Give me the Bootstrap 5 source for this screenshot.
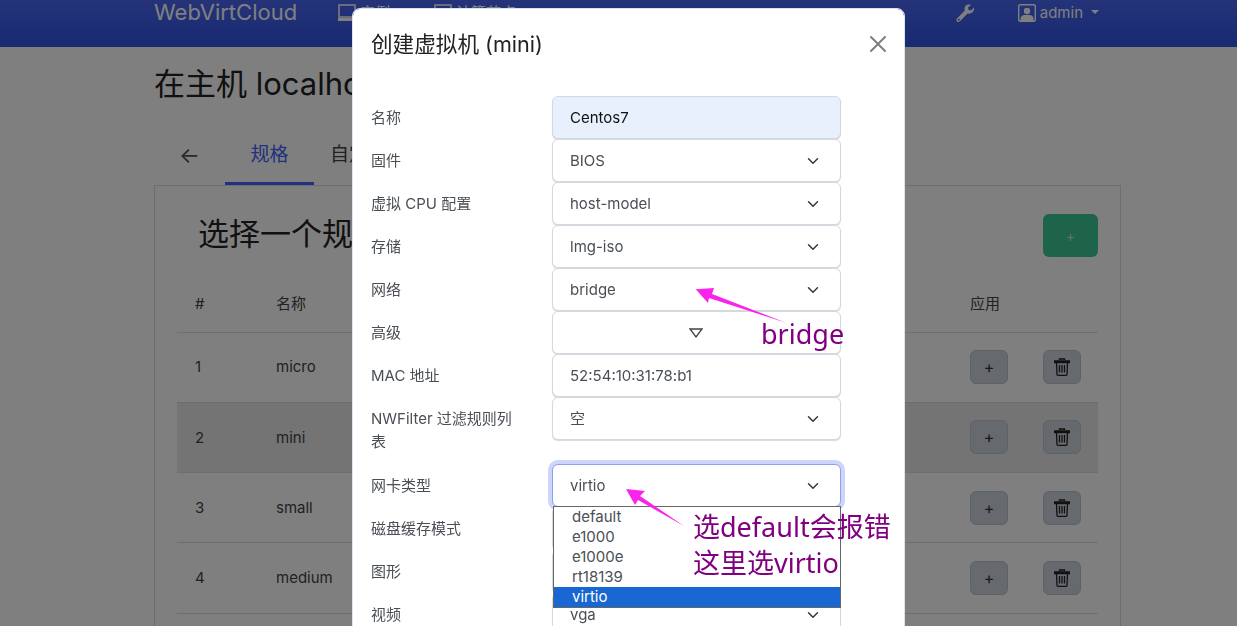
<!DOCTYPE html>
<html lang="zh-CN">
<head>
    <meta charset="UTF-8">
    <title>WebVirtCloud</title>
    <link href="https://cdn.jsdelivr.net/npm/bootstrap@5.3.0/dist/css/bootstrap.min.css" rel="stylesheet">
    <style>
        html, body { height: 100%; overflow: hidden; }
        body { background: #fff; color: #222; font-family: Inter, "Noto Sans CJK SC", sans-serif; font-size: 15px; }
        .top-bar { height: 47px; background: linear-gradient(#4a66f2, #2f55e6); padding-left: 154px; color: #fff; }
        .top-brand { font-size: 22px; line-height: 24px; width: 184px; }
        .top-link { line-height: 26px; margin-right: 44px; }
        .top-right { margin-left: auto; margin-right: 138px; gap: 43px; line-height: 26px; }
        .page-wrap { width: 967px; margin-left: 154px; }
        .page-title { font-size: 31px; font-weight: 400; line-height: 38px; margin: 18px 0 0; white-space: nowrap; }
        .tab-row { height: 66px; margin-top: 16px; }
        .tab-item { color: #444; font-size: 19px; width: 89px; height: 66px; line-height: 72px; text-align: center; }
        .tab-back { width: 71px; font-size: 22px; color: #555; }
        .tab-on { color: #4460fe; border-bottom: 3px solid #4460fe; }
        .flavor-card { border: 1px solid #ddd; height: 600px; padding: 28px 22px 0; border-radius: 0; }
        .card-head { height: 43px; }
        .card-title-big { font-size: 31px; font-weight: 400; line-height: 38px; margin: 0 0 3px 21px; white-space: nowrap; }
        .btn-add { width: 55px; height: 43px; background: #3cc896; border: 0; color: #ddd; font-size: 14px; }
        .flavor-table { width: 921px; margin-top: 21px; table-layout: fixed; --bs-table-bg: transparent; }
        .flavor-table th, .flavor-table td { font-weight: 400; color: #444; padding: 1px 0 0 18px; vertical-align: middle; border-color: #ddd; }
        .flavor-table thead tr { height: 54px; }
        .flavor-table thead th { padding-top: 0; padding-bottom: 2px; }
        .flavor-table .cell-act { padding-left: 0; padding-top: 0; }
        .flavor-table tbody tr { height: 70.3px; }
        .row-hot td { background: #e8e8e8; }
        .btn-act { width: 38px; height: 34px; padding: 0; background: #ccd3da; border: 1px solid #bcc4cc; color: #333; line-height: 1; }
        .btn-act svg { display: block; margin: auto; }

        .dlg { width: 553px; max-width: 553px; margin: 8px 0 0 352px; }
        .dlg .modal-content { border-radius: 8px; height: 800px; display: block; border-color: #dde3f0; }
        .dlg-head { height: 71px; padding: 15px 18px 17px; }
        .dlg-title { font-size: 21.6px; font-weight: 400; line-height: 36px; }
        .dlg-close { margin: 0; padding: 0; width: 16px; height: 16px; background-size: 16px; margin-right: 1px; }
        .dlg-body { padding: 16px 18px; }
        .form-line { min-height: 43px; }
        .form-name { width: 181px; padding: 10px 30px 10px 0; margin: 0; line-height: 23px; color: #4a4f55; }
        .form-name.two-line { padding-bottom: 11px; }
        .form-val { width: 289px; height: 43px; padding: 0 17px; font-size: 15px; color: #4a4f55; border-color: #d4d9e0; border-radius: 6px; box-shadow: 0 1px 1px #d4d9e0; }
        .form-val:focus { box-shadow: none; }
        .form-val.filled { background-color: #e8f0fe; color: #111; }
        .form-val.form-select { padding-top: 2px; background-position: right 19px center; background-size: 16px 12px; }
        .form-val.focused { border-color: #8fa0f4; box-shadow: 0 0 0 4px #cdd6fa; }
        .adv-btn { width: 289px; height: 43px; border: 1px solid #d4d9e0; border-radius: 6px; background: #fff; padding: 0 2px 0 0; box-shadow: 0 1px 1px #d4d9e0; }
        .open-list { position: absolute; z-index: 5; left: 200px; top: 497px; width: 288px; height: 102px; background: #fff; border: 1px solid #666; color: #4a4f55; line-height: 20px; padding-left: 0; margin: 0; list-style: none; }
        .open-list li { padding-left: 18px; }
        .open-list .picked { background: #1967d2; color: #fff; height: 20px; }
        .note-layer { position: fixed; left: 0; top: 0; z-index: 1060; pointer-events: none; }
        .note-text { position: fixed; z-index: 1061; color: #800080; font-family: "Noto Sans", "Noto Sans CJK SC", sans-serif; font-size: 27px; line-height: 36px; white-space: nowrap; }
        .note-1 { left: 761px; top: 316px; }
        .note-2 { left: 693px; top: 509px; }
        .note-3 { left: 693px; top: 545px; }
    </style>
</head>
<body>
    <div class="top-bar d-flex align-items-start">
        <div class="top-brand">WebVirtCloud</div>
        <div class="top-link d-flex align-items-start gap-1">
            <svg width="18" height="18" viewBox="0 0 18 18" class="mt-1"><rect x="1" y="1" width="16" height="12" fill="none" stroke="#fff" stroke-width="1.5"/><rect x="0" y="14" width="18" height="3" fill="#fff"/></svg>
            <span>实例</span>
        </div>
        <div class="top-link d-flex align-items-start gap-1">
            <svg width="18" height="18" viewBox="0 0 18 18" class="mt-1"><rect x="1" y="1" width="16" height="7" fill="none" stroke="#fff" stroke-width="1.5"/><rect x="1" y="10" width="16" height="7" fill="none" stroke="#fff" stroke-width="1.5"/></svg>
            <span>计算节点</span>
        </div>
        <div class="top-right d-flex align-items-start">
            <svg class="mt-1" width="19" height="19" viewBox="0 0 19 19"><path d="M18 3.6 15 6.4 12.6 5.9 12 3.5 15 .8C12.6 0 10 .8 9 2.8 8.4 4 8.4 5.2 8.8 6.4L1 14.4C.1 15.4.1 16.5 1 17.4 1.9 18.3 3 18.2 3.9 17.3L11.6 9.4C13 9.9 14.8 9.7 16.2 8.6 17.7 7.4 18.4 5.5 18 3.6Z" fill="#fff"/><circle cx="2.9" cy="15.8" r="1" fill="#4a66f2"/></svg>
            <div class="d-flex align-items-start">
                <svg class="mt-1 me-1" width="18" height="18" viewBox="0 0 18 18"><rect x=".7" y=".7" width="16.6" height="16.6" rx="1.5" fill="none" stroke="#fff" stroke-width="1.4"/><circle cx="9" cy="7" r="3.2" fill="#fff"/><path d="M2.5 17V14.5C2.5 12.3 4.5 11 6.5 11H11.5C13.5 11 15.5 12.3 15.5 14.5V17Z" fill="#fff"/></svg>
                <span>admin</span>
                <span class="dropdown-toggle ms-2"></span>
            </div>
        </div>
    </div>

    <div class="page-wrap">
        <h1 class="page-title">在主机 localhost 上创建虚拟机</h1>
        <div class="tab-row d-flex">
            <div class="tab-item tab-back">←</div>
            <div class="tab-item tab-on">规格</div>
            <div class="tab-item">自定义</div>
        </div>
        <div class="flavor-card card">
            <div class="card-head d-flex justify-content-between align-items-center">
                <h2 class="card-title-big">选择一个规格</h2>
                <button class="btn-add btn">+</button>
            </div>
            <table class="flavor-table table mb-0">
                <colgroup><col style="width:81px"><col style="width:712px"><col style="width:73px"><col></colgroup>
                <thead><tr><th>#</th><th>名称</th><th class="cell-act">应用</th><th></th></tr></thead>
                <tbody>
                    <tr><td>1</td><td>micro</td><td class="cell-act"><button class="btn-act btn">+</button></td><td class="cell-act"><button class="btn-act btn"><svg width="16" height="18" viewBox="0 0 16 18"><path d="M5.5 2V1H10.5V2M0.5 3H15.5V4.5H.5ZM2.5 4.5 3 16.5C3 17 3.500 17.300 4 17.300H12C12.500 17.300 13 17 13 16.500L13.500 4.500M5.500 7V14.500M8 7V14.500M10.500 7V14.500" fill="none" stroke="#222" stroke-width="1.300"/></svg></button></td></tr>
                    <tr class="row-hot"><td>2</td><td>mini</td><td class="cell-act"><button class="btn-act btn">+</button></td><td class="cell-act"><button class="btn-act btn"><svg width="16" height="18" viewBox="0 0 16 18"><path d="M5.5 2V1H10.5V2M0.5 3H15.5V4.5H.5ZM2.5 4.5 3 16.5C3 17 3.500 17.300 4 17.300H12C12.500 17.300 13 17 13 16.500L13.500 4.500M5.500 7V14.500M8 7V14.500M10.500 7V14.500" fill="none" stroke="#222" stroke-width="1.300"/></svg></button></td></tr>
                    <tr><td>3</td><td>small</td><td class="cell-act"><button class="btn-act btn">+</button></td><td class="cell-act"><button class="btn-act btn"><svg width="16" height="18" viewBox="0 0 16 18"><path d="M5.5 2V1H10.5V2M0.5 3H15.5V4.5H.5ZM2.5 4.5 3 16.5C3 17 3.500 17.300 4 17.300H12C12.500 17.300 13 17 13 16.500L13.500 4.500M5.500 7V14.500M8 7V14.500M10.500 7V14.500" fill="none" stroke="#222" stroke-width="1.300"/></svg></button></td></tr>
                    <tr><td>4</td><td>medium</td><td class="cell-act"><button class="btn-act btn">+</button></td><td class="cell-act"><button class="btn-act btn"><svg width="16" height="18" viewBox="0 0 16 18"><path d="M5.5 2V1H10.5V2M0.5 3H15.5V4.5H.5ZM2.5 4.5 3 16.5C3 17 3.500 17.300 4 17.300H12C12.500 17.300 13 17 13 16.500L13.500 4.500M5.500 7V14.500M8 7V14.500M10.500 7V14.500" fill="none" stroke="#222" stroke-width="1.300"/></svg></button></td></tr>
                </tbody>
            </table>
        </div>
    </div>

    <div class="modal-backdrop show"></div>

    <div class="modal d-block">
        <div class="dlg modal-dialog">
            <div class="modal-content">
                <div class="dlg-head modal-header border-0">
                    <h5 class="dlg-title modal-title">创建虚拟机 (mini)</h5>
                    <button type="button" class="dlg-close btn-close" aria-label="Close"></button>
                </div>
                <div class="dlg-body modal-body">
                    <div class="form-line d-flex"><label class="form-name">名称</label><input class="form-val filled form-control" value="Centos7"></div>
                    <div class="form-line d-flex"><label class="form-name">固件</label><select class="form-val form-select"><option>BIOS</option></select></div>
                    <div class="form-line d-flex"><label class="form-name">虚拟 CPU 配置</label><select class="form-val form-select"><option>host-model</option></select></div>
                    <div class="form-line d-flex"><label class="form-name">存储</label><select class="form-val form-select"><option>lmg-iso</option></select></div>
                    <div class="form-line d-flex"><label class="form-name">网络</label><select class="form-val form-select"><option>bridge</option></select></div>
                    <div class="form-line d-flex"><label class="form-name">高级</label>
                        <button class="adv-btn" type="button"><svg width="14" height="10" viewBox="0 0 14 10"><path d="M1 1H13L7 9Z" fill="none" stroke="#444" stroke-width="1.300"/></svg></button>
                    </div>
                    <div class="form-line d-flex"><label class="form-name">MAC 地址</label><input class="form-val form-control" value="52:54:10:31:78:b1"></div>
                    <div class="form-line d-flex"><label class="form-name two-line">NWFilter 过滤规则列表</label><select class="form-val form-select"><option>空</option></select></div>
                    <div class="form-line d-flex"><label class="form-name">网卡类型</label><select class="form-val focused form-select"><option>virtio</option></select></div>
                    <div class="form-line d-flex"><label class="form-name">磁盘缓存模式</label><select class="form-val form-select"><option>default</option></select></div>
                    <div class="form-line d-flex"><label class="form-name">图形</label><select class="form-val form-select"><option>vnc</option></select></div>
                    <div class="form-line d-flex"><label class="form-name">视频</label><select class="form-val form-select"><option>vga</option></select></div>
                </div>
                <ul class="open-list">
                    <li>default</li>
                    <li>e1000</li>
                    <li>e1000e</li>
                    <li>rt18139</li>
                    <li class="picked">virtio</li>
                </ul>
            </div>
        </div>
    </div>

    <svg class="note-layer" width="1237" height="626" viewBox="0 0 1237 626">
        <polygon points="695.7,289.3 714,288 712,294 786,322.700 709,298 708,303" fill="#fb22ec"/>
        <polygon points="626,489 645,491 640,496 684,526 638,500 635,505" fill="#fb22ec"/>
    </svg>
    <div class="note-text note-1">bridge</div>
    <div class="note-text note-2">选default会报错</div>
    <div class="note-text note-3">这里选virtio</div>
</body>
</html>
